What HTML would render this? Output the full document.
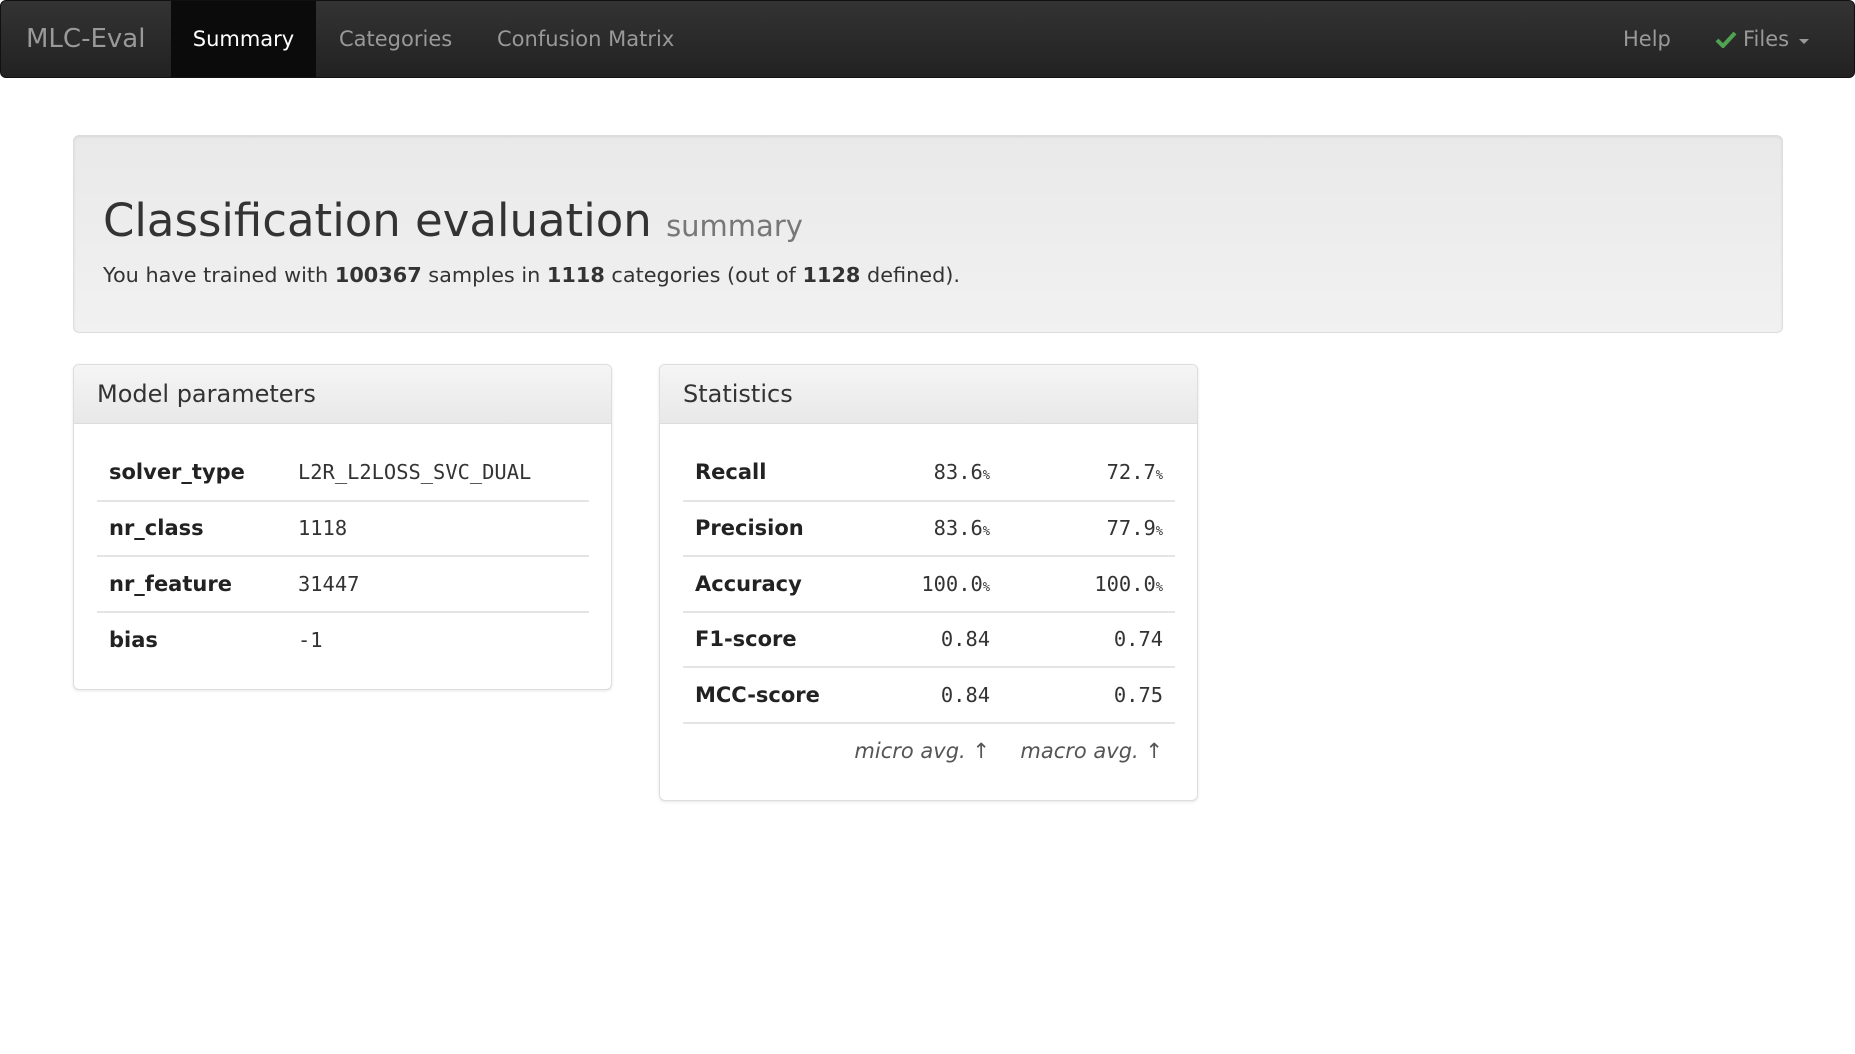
<!DOCTYPE html>
<html><head><meta charset="utf-8"><style>
*{box-sizing:border-box;margin:0;padding:0}
body{width:1855px;height:1054px;background:#fff;font-family:"DejaVu Sans","Liberation Sans",sans-serif;color:#333;position:relative;overflow:hidden}
.nav{position:absolute;left:0;top:0;width:1855px;height:78px;background:linear-gradient(#333,#222);border:1px solid #111;border-radius:6px}
.nav span{position:absolute;top:0;line-height:76px;font-size:21px;color:#999;white-space:nowrap}
.brand{left:25px;font-size:26px!important}
.active{left:170px;width:145px;height:76px;background:#0b0b0b;color:#fff!important;text-align:center}
.jumbo{position:absolute;left:73px;top:135px;width:1710px;height:198px;background:linear-gradient(#e9e9e9,#f1f1f1);border:1px solid #ddd;border-radius:6px;box-shadow:inset 0 1px 2px rgba(0,0,0,.08)}
.jumbo h1{position:absolute;left:29px;top:62px;font-size:45px;font-weight:normal;line-height:1;color:#333;white-space:nowrap}
.jumbo h1 small{font-size:29px;color:#777}
.jumbo p{position:absolute;left:29px;top:127px;font-size:20.8px;white-space:nowrap}
.panel{position:absolute;top:364px;width:539px;border:1px solid #ddd;border-radius:6px;box-shadow:0 1px 3px rgba(0,0,0,.1);background:#fff}
.ph{height:59px;background:linear-gradient(#f5f5f5,#e8e8e8);border-bottom:1px solid #ddd;border-radius:6px 6px 0 0;font-size:24px;line-height:58px;padding-left:23px}
table{border-collapse:collapse;margin:21px 0 0 23px;width:492px}
td{height:55.5px;font-size:20px;padding:0 12px;vertical-align:middle;white-space:nowrap}
tr+tr td{border-top:2px solid #e4e4e4}
td.l{font-weight:bold;font-size:21px;color:#222}
td.m{font-family:"DejaVu Sans Mono","Liberation Mono",monospace;font-size:20.4px}
td.r{text-align:right}
.pc{font-size:12px}
td.f{font-style:italic;color:#555;text-align:right;font-size:21px;border-top:2px solid #e4e4e4}
</style></head><body>
<div class="nav">
<span class="brand">MLC-Eval</span>
<span class="active">Summary</span>
<span style="left:338px">Categories</span>
<span style="left:496px">Confusion Matrix</span>
<span style="left:1622px">Help</span>
<span style="left:1714px"><svg width="22" height="18" viewBox="0 0 22 18" style="vertical-align:-2px"><path d="M2 10 L8 16 L20 3" stroke="#51a351" stroke-width="4" fill="none"/></svg></span>
<span style="left:1742px">Files</span>
<span style="left:1798px;top:38px;line-height:0;width:0;height:0;border-left:5px solid transparent;border-right:5px solid transparent;border-top:5px solid #999"></span>
</div>
<div class="jumbo">
<h1>Classification evaluation <small>summary</small></h1>
<p>You have trained with <b>100367</b> samples in <b>1118</b> categories (out of <b>1128</b> defined).</p>
</div>
<div class="panel" style="left:73px;height:326px">
<div class="ph">Model parameters</div>
<table>
<tr><td class="l" style="width:189px">solver_type</td><td class="m">L2R_L2LOSS_SVC_DUAL</td></tr>
<tr><td class="l">nr_class</td><td class="m">1118</td></tr>
<tr><td class="l">nr_feature</td><td class="m">31447</td></tr>
<tr><td class="l">bias</td><td class="m">-1</td></tr>
</table>
</div>
<div class="panel" style="left:659px;height:437px">
<div class="ph">Statistics</div>
<table>
<tr><td class="l" style="width:150px">Recall</td><td class="m r">83.6<span class="pc">%</span></td><td class="m r" style="width:173px">72.7<span class="pc">%</span></td></tr>
<tr><td class="l">Precision</td><td class="m r">83.6<span class="pc">%</span></td><td class="m r">77.9<span class="pc">%</span></td></tr>
<tr><td class="l">Accuracy</td><td class="m r">100.0<span class="pc">%</span></td><td class="m r">100.0<span class="pc">%</span></td></tr>
<tr><td class="l">F1-score</td><td class="m r">0.84</td><td class="m r">0.74</td></tr>
<tr><td class="l">MCC-score</td><td class="m r">0.84</td><td class="m r">0.75</td></tr>
<tr><td style="border-top:2px solid #e4e4e4"></td><td class="f">micro avg. ↑</td><td class="f">macro avg. ↑</td></tr>
</table>
</div>
</body></html>
